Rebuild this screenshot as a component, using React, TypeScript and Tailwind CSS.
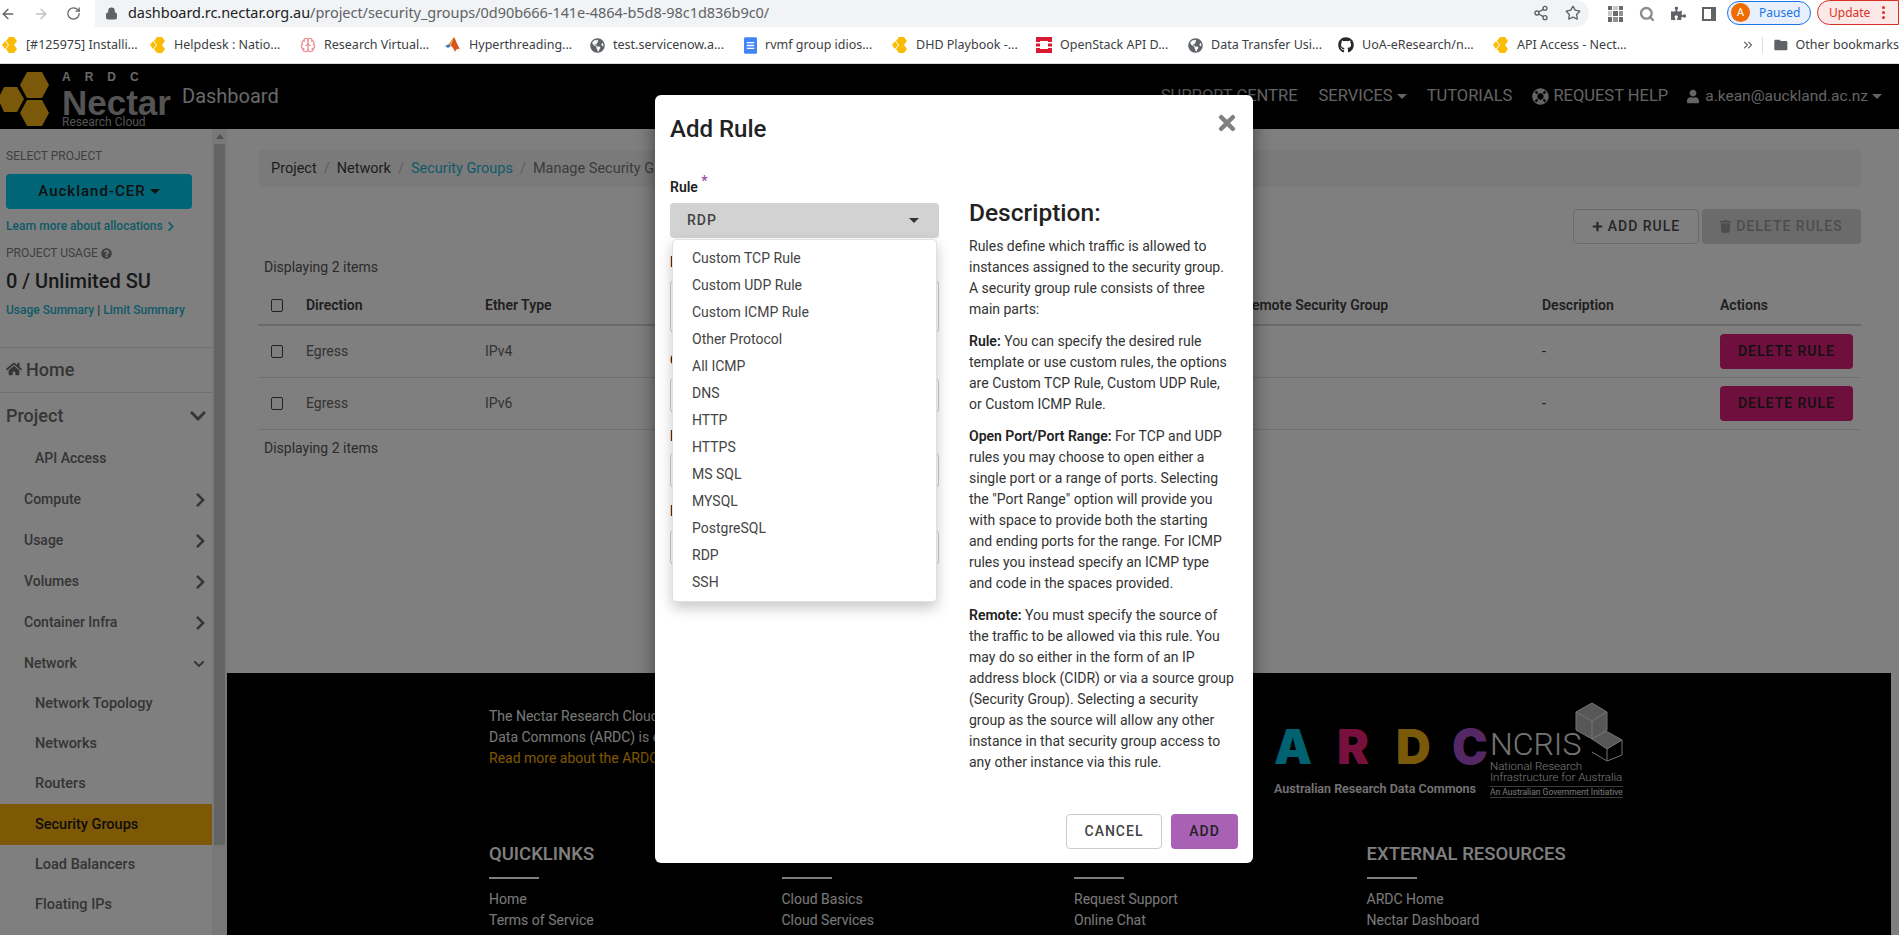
import { ArrowLeft, ArrowRight, RotateCw, Lock, Share2, Star, Search, ChevronsRight, Brain } from 'lucide-react';
import {
  FaChevronDown,
  FaChevronRight,
  FaGithub,
  FaGlobeAmericas,
  FaHome,
  FaLifeRing,
  FaPlus,
  FaPuzzlePiece,
  FaQuestionCircle,
  FaTimes,
  FaTrash,
  FaUser,
} from 'react-icons/fa';
import { MdFolder } from 'react-icons/md';

function HoneyIcon() {
  return (
    <svg viewBox="0 0 16 16" className="w-4 h-4 shrink-0">
      <path d="M7 0h5l3 4-3 4H7L4 4zM0 8l3-4 3 4-3 4zM7 8h5l3 4-3 4H7l-3-4z" fill="#fbbc04" />
    </svg>
  );
}

function MatlabIcon() {
  return (
    <svg viewBox="0 0 16 16" className="w-4 h-4 shrink-0">
      <path d="M0 9l4-2 2 2-3 2z" fill="#4a7ab5" />
      <path d="M4 7l5-7c2 3 3 8 6 12-3-1-4 1-5 3-1-3-3-6-6-8z" fill="#d9531e" />
      <path d="M9 0c-1 3-2 6-3 9l-2-2z" fill="#e8a33d" />
    </svg>
  );
}

function DocsIcon() {
  return (
    <svg viewBox="0 0 14 18" className="w-[13px] h-[17px] shrink-0">
      <rect width="14" height="18" rx="1.5" fill="#4285f4" />
      <path d="M3 6h8M3 9h8M3 12h8" stroke="#fff" strokeWidth="1.4" />
    </svg>
  );
}

function OpenStackIcon() {
  return (
    <svg viewBox="0 0 16 16" className="w-4 h-4 shrink-0">
      <path d="M0 0h16v5h-4V4H4v1H0zM0 11h4v1h8v-1h4v5H0zM0 6.500h4v3H0zM12 6.500h4v3h-4z" fill="#da1a32" />
    </svg>
  );
}

const bookmarks = [
  { w: 'w-[148px]', label: '[#125975] Installi...', icon: <HoneyIcon /> },
  { w: 'w-[150px]', label: 'Helpdesk : Natio...', icon: <HoneyIcon /> },
  { w: 'w-[145px]', label: 'Research Virtual...', icon: <Brain className="w-4 h-4 text-[#ec8f97]" /> },
  { w: 'w-[145px]', label: 'Hyperthreading...', icon: <MatlabIcon /> },
  { w: 'w-[154px]', label: 'test.servicenow.a...', icon: <FaGlobeAmericas className="w-[15px] h-[15px] text-[#5f6368]" /> },
  { w: 'w-[148px]', label: 'rvmf group idios...', icon: <DocsIcon /> },
  { w: 'w-[144px]', label: 'DHD Playbook -...', icon: <HoneyIcon /> },
  { w: 'w-[152px]', label: 'OpenStack API D...', icon: <OpenStackIcon /> },
  { w: 'w-[150px]', label: 'Data Transfer Usi...', icon: <FaGlobeAmericas className="w-[15px] h-[15px] text-[#5f6368]" /> },
  { w: 'w-[155px]', label: 'UoA-eResearch/n...', icon: <FaGithub className="w-4 h-4 text-[#24292e]" /> },
  { w: 'w-[200px]', label: 'API Access - Nect...', icon: <HoneyIcon /> },
];

function BrowserChrome() {
  return (
    <div className="h-16 bg-white border-b border-[#dadce0] font-['Noto_Sans',sans-serif]">
      <div className="h-[27px] flex items-center">
        <div className="w-[95px] flex items-center text-[#5f6368]">
          <ArrowLeft className="w-4 h-4 ml-0" />
          <ArrowRight className="w-4 h-4 ml-[17px] text-[#bdc1c6]" />
          <RotateCw className="w-[15px] h-[15px] ml-[17px]" />
        </div>
        <div className="w-[1494px] h-[27px] -mt-px bg-[#f1f3f4] rounded-r-[14px] flex items-center pl-[10px]">
          <Lock className="w-[13px] h-[13px] text-[#5f6368] fill-[#5f6368]" />
          <span className="ml-[10px] text-[14.500px] tracking-[-0.05px] text-[#5f6368] whitespace-nowrap">
            <span className="text-[#202124]">dashboard.rc.nectar.org.au</span>/project/security_groups/0d90b666-141e-4864-b5d8-98c1d836b9c0/
          </span>
          <Share2 className="w-4 h-4 ml-auto text-[#5f6368]" />
          <Star className="w-4 h-4 ml-4 mr-2 text-[#5f6368]" />
        </div>
        <div className="ml-[19px] h-4 w-[15px] grid grid-cols-3 gap-px opacity-80">
          <span className="bg-[#444]" /><span className="bg-[#bbb]" /><span className="bg-[#444]" />
          <span className="bg-[#bbb]" /><span className="bg-[#444]" /><span className="bg-[#777]" />
          <span className="bg-[#444]" /><span className="bg-[#777]" /><span className="bg-[#444]" />
        </div>
        <Search className="w-4 h-4 ml-[16px] text-[#8a8d91]" strokeWidth={3.500} />
        <FaPuzzlePiece className="w-[15px] h-[15px] ml-[16px] text-[#5f6368]" />
        <div className="w-[14px] h-[14px] ml-[16px] border-2 border-[#5f6368] border-r-[5px]" />
        <div className="ml-[11px] w-[84px] h-[24px] -mt-[2px] rounded-full border border-[#1a73e8] bg-[#e8f0fe] flex items-center pl-[3px]">
          <span className="w-[19px] h-[19px] rounded-full bg-[#ef6c00] text-white text-[11px] flex items-center justify-center">A</span>
          <span className="ml-[9px] text-[12px] text-[#1a73e8]">Paused</span>
        </div>
        <div className="ml-[6px] flex-1 h-[25px] -mt-[2px] rounded-l-full border border-[#d93025] bg-[#fce8e6] flex items-center pl-[11px] text-[12px] text-[#d93025]">
          Update
          <span className="ml-[12px] flex flex-col gap-[2px]">
            <span className="w-[3px] h-[3px] rounded-full bg-[#d93025]" />
            <span className="w-[3px] h-[3px] rounded-full bg-[#d93025]" />
            <span className="w-[3px] h-[3px] rounded-full bg-[#d93025]" />
          </span>
        </div>
      </div>
      <div className="h-[36px] flex items-center pl-[2px] text-[12.500px] text-[#3c4043]">
        {bookmarks.map(b => (
          <div key={b.label} className={`${b.w} shrink-0 flex items-center gap-2 whitespace-nowrap`}>
            {b.icon}
            <span>{b.label}</span>
          </div>
        ))}
        <ChevronsRight className="w-4 h-4 ml-[48px] text-[#5f6368]" />
        <div className="w-px h-4 bg-[#dadce0] ml-[7px]" />
        <MdFolder className="w-[18px] h-[18px] ml-[10px] text-[#5f6368]" />
        <span className="ml-[7px] whitespace-nowrap">Other bookmarks</span>
      </div>
    </div>
  );
}

function Caret() {
  return <span className="inline-block ml-1 align-middle border-x-[5px] border-x-transparent border-t-[5px] border-t-current" />;
}

function Header() {
  return (
    <div className="h-[65px] bg-black flex items-center">
      <svg viewBox="0 0 50 55" className="w-[50px] h-[55px] mt-[5px] shrink-0">
        <path d="M27 0h15l7 13-7 13H27l-7-13z M4 15h13l7 12-7 13H4l-6-13z M27 28h15l7 13-7 13H27l-7-13z" fill="#f5b414" />
      </svg>
      <div className="ml-[12px] w-[120px] self-start mt-[7px] font-['Liberation_Sans',sans-serif] text-[#a8a8a8]">
        <div className="text-[12px] leading-[12px] font-bold tracking-[14px] text-[#d0d0d0]">ARDC</div>
        <div className="text-[35px] leading-[26px] font-bold mt-[7px]">Nectar</div>
        <div className="text-[12px] leading-[12px] font-['Roboto',sans-serif]">Research Cloud</div>
      </div>
      <span className="text-[20px] text-[#d0d0d0] -mt-[1px]">Dashboard</span>
      <div className="ml-auto pr-[17px] flex items-center text-[16.500px] text-[#c8c8c8] whitespace-nowrap">
        <span>SUPPORT CENTRE</span>
        <span className="ml-[21px]">SERVICES<Caret /></span>
        <span className="ml-[20px]">TUTORIALS</span>
        <FaLifeRing className="ml-[20px] w-[17px] h-[17px]" />
        <span className="ml-[4px]">REQUEST HELP</span>
        <FaUser className="ml-[19px] w-[12px] h-[15px]" />
        <span className="ml-[6px] text-[15.500px]">a.kean@auckland.ac.nz<Caret /></span>
      </div>
    </div>
  );
}

const navItems = [
  { label: 'API Access', sub: true },
  { label: 'Compute', arrow: 'right' },
  { label: 'Usage', arrow: 'right' },
  { label: 'Volumes', arrow: 'right' },
  { label: 'Container Infra', arrow: 'right' },
  { label: 'Network', arrow: 'down' },
];

const networkItems = ['Network Topology', 'Networks', 'Routers', 'Security Groups', 'Load Balancers', 'Floating IPs'];

function Sidebar() {
  return (
    <div className="w-[227px] shrink-0 flex">
      <div className="w-[212px] bg-white text-[#6a6a6a]">
        <div className="px-[6px] pt-[19px] pb-[29px] border-b border-[#e0e0e0] h-[219px]">
          <div className="text-[12px] leading-4 text-[#808080]">SELECT PROJECT</div>
          <div className="mt-[10px] w-[186px] h-[35px] rounded bg-[#00caee] text-[#222] text-[15px] tracking-[1px] font-medium flex items-center justify-center">
            Auckland-CER<Caret />
          </div>
          <div className="mt-[9px] text-[12px] leading-4 font-medium text-[#1cb4d0] flex items-center whitespace-nowrap">
            Learn more about allocations <FaChevronRight className="w-[10px] h-[11px] ml-[3px]" />
          </div>
          <div className="mt-[11px] text-[12px] leading-4 text-[#808080] flex items-center">
            PROJECT USAGE <FaQuestionCircle className="w-[11px] h-[11px] ml-[3px]" />
          </div>
          <div className="mt-[6px] text-[20px] leading-7 text-[#333] font-medium">0 / Unlimited SU</div>
          <div className="mt-[7px] text-[12px] leading-4 font-medium text-[#1cb4d0]">
            Usage Summary <span className="text-[#555]">|</span> Limit Summary
          </div>
        </div>
        <div className="h-[45px] pb-[2px] border-b border-[#e0e0e0] flex items-center px-[6px] text-[18px] font-medium">
          <FaHome className="w-[16px] h-[16px] mr-[4px]" /> Home
        </div>
        <div className="h-[45px] flex items-center justify-between pl-[6px] pr-[5px] text-[18px] font-medium">
          Project <FaChevronDown className="w-[18px] h-[18px]" />
        </div>
        {navItems.map(item => (
          <div
            key={item.label}
            className={item.sub
              ? 'h-[41px] flex items-center pl-[35px] text-[14px] font-medium'
              : 'h-[41px] flex items-center justify-between pl-[24px] pr-[6px] text-[14px] font-medium'}
          >
            {item.label}
            {item.arrow === 'right' && <FaChevronRight className="w-[11px] h-[16px]" />}
            {item.arrow === 'down' && <FaChevronDown className="w-[14px] h-[12px]" />}
          </div>
        ))}
        <div>
          {networkItems.map(label => (
            <div
              key={label}
              className={label === 'Security Groups'
                ? 'h-[41px] flex items-center pl-[35px] text-[14.500px] font-medium bg-[#fab00a] text-[#1c1c1c]'
                : 'h-[40px] flex items-center pl-[35px] text-[14.500px] font-medium'}
            >
              {label}
            </div>
          ))}
        </div>
      </div>
      <div className="w-[15px] bg-[#f1f1f1] px-[2px]">
        <div className="h-[15px] flex items-center justify-center">
          <span className="border-x-[4px] border-x-transparent border-b-[5px] border-b-[#a3a3a3]" />
        </div>
        <div className="h-[701px] bg-[#c8c8c8]" />
      </div>
    </div>
  );
}

const gridCols = 'grid grid-cols-[48px_179px_195px_190px_180px_193px_299px_178px_141px]';

const rows = [
  { ether: 'IPv4', prefix: '0.0.0.0/0' },
  { ether: 'IPv6', prefix: '::/0' },
];

function Checkbox() {
  return <span className="block w-[12px] h-[13px] ml-[13px] border border-[#444] rounded-[2px]" />;
}

function MainContent() {
  return (
    <div className="flex-1 bg-white pl-[31px] pr-[30px] pt-[21px] h-[544px] font-['Roboto',sans-serif]">
      <div className="h-[37px] pt-px rounded bg-[#f5f5f5] flex items-center pl-[13px] text-[14.500px] text-[#3c3c3c] whitespace-nowrap">
        Project <span className="mx-[7px] text-[#bbb]">/</span> Network <span className="mx-[7px] text-[#bbb]">/</span>
        <span className="text-[#1cb4d0]">Security Groups</span> <span className="mx-[7px] text-[#bbb]">/</span>
        <span className="text-[#777]">Manage Security Group Rules</span>
      </div>
      <div className="mt-[22px] flex justify-end gap-[3px] text-[14px] tracking-[1px] font-medium">
        <div className="w-[126px] h-[35px] rounded border border-[#d4d4d4] text-[#4c4c4c] flex items-center justify-center gap-[5px]">
          <FaPlus className="w-[11px] h-[11px]" /> ADD RULE
        </div>
        <div className="w-[159px] h-[35px] rounded bg-[#d6d6d6] text-[#9a9a9a] flex items-center justify-center gap-[5px]">
          <FaTrash className="w-[11px] h-[13px]" /> DELETE RULES
        </div>
      </div>
      <div className="mt-[13px] h-[21px] pl-[6px] text-[14px] leading-[21px] text-[#555]">Displaying 2 items</div>
      <div className={`${gridCols} mt-[8px] h-[40px] items-center border-b-2 border-[#d4d4d4] text-[14px] font-semibold text-[#3e3e3e] whitespace-nowrap`}>
        <Checkbox />
        <span>Direction</span>
        <span>Ether Type</span>
        <span>IP Protocol</span>
        <span>Port Range</span>
        <span>Remote IP Prefix</span>
        <span>Remote Security Group</span>
        <span>Description</span>
        <span>Actions</span>
      </div>
      {rows.map(row => (
        <div key={row.ether} className={`${gridCols} h-[52px] items-center border-b border-[#e0e0e0] text-[14px] text-[#666]`}>
          <Checkbox />
          <span>Egress</span>
          <span>{row.ether}</span>
          <span>Any</span>
          <span>Any</span>
          <span>{row.prefix}</span>
          <span>-</span>
          <span className="text-[#333]">-</span>
          <span className="h-[35px] w-[133px] rounded bg-[#de1e7a] text-[#222] tracking-[1px] font-medium flex items-center justify-center">DELETE RULE</span>
        </div>
      ))}
      <div className="mt-[8px] pl-[6px] text-[14px] leading-[21px] text-[#555]">Displaying 2 items</div>
    </div>
  );
}

const footerCols = [
  { title: 'QUICKLINKS', links: ['Home', 'Terms of Service'] },
  { title: 'SUPPORT', links: ['Cloud Basics', 'Cloud Services'] },
  { title: 'CONTACT', links: ['Request Support', 'Online Chat'] },
  { title: 'EXTERNAL RESOURCES', links: ['ARDC Home', 'Nectar Dashboard'] },
];

function Footer() {
  return (
    <div className="h-[262px] bg-black text-[#f0f0f0] pl-[262px] pt-[33px] relative overflow-hidden font-['Roboto',sans-serif]">
      <div className="h-[137px] text-[14px] leading-[21px] whitespace-nowrap">
        <div>The Nectar Research Cloud is supported by the Australian Research</div>
        <div>Data Commons (ARDC) is enabled by NCRIS.</div>
        <div className="text-[#fab00a]">Read more about the ARDC</div>
      </div>
      <div className="flex">
        {footerCols.map(col => (
          <div key={col.title} className="w-[292.500px] shrink-0">
            <div className="text-[18.500px] leading-[22px] font-medium text-white whitespace-nowrap">{col.title}</div>
            <div className="mt-[12px] h-[2px] w-[50px] bg-white" />
            <div className="mt-[10px] text-[14px] leading-[21px]">
              {col.links.map(link => <div key={link}>{link}</div>)}
            </div>
          </div>
        ))}
      </div>

      {/* partner logos sit over the right of the intro row */}
      <div className="absolute left-[1047px] top-[54px] w-[210px]">
        <div className="h-[40px] relative text-[48px] leading-[40px] font-black font-['Inter',sans-serif]">
          <span className="absolute left-0 text-[#00c4e0]">A</span>
          <span className="absolute left-[63px] text-[#f0207c]">R</span>
          <span className="absolute left-[122px] text-[#f5b414]">D</span>
          <span className="absolute left-[178px] text-[#a850c8]">C</span>
        </div>
        <div className="mt-[14px] text-[12.500px] leading-4 font-semibold whitespace-nowrap text-[#e8e8e8]">Australian Research Data Commons</div>
      </div>
      <div className="absolute left-[1263px] top-[56px] w-[133px] text-[#e8e8e8]">
        <div className="text-[32px] leading-[30px] font-light">NCRIS</div>
        <div className="mt-[2px] text-[11.500px] leading-[11px] font-light whitespace-nowrap">National Research<br />Infrastructure for Australia</div>
        <div className="mt-[3px] border-y border-[#777] text-[8.500px] leading-[10px] whitespace-nowrap">An Australian Government Initiative</div>
      </div>
      <svg viewBox="0 0 48 60" className="absolute left-[1348px] top-[29px] w-[48px] h-[60px]" fill="none" stroke="#e8e8e8">
        <path d="M1 10L17 1l15 9v18L17 37 1 28z" fill="#e8e8e8" fillOpacity="0.75" />
        <path d="M1 10l16 9 15-9M17 19v18" />
        <path d="M17 37l14-8 16 9-15 9z" fill="#e8e8e8" fillOpacity="0.75" />
        <path d="M47 38v15l-15 6-15-9" />
        <path d="M32 47v12" />
      </svg>
    </div>
  );
}

const ruleOptions = [
  'Custom TCP Rule',
  'Custom UDP Rule',
  'Custom ICMP Rule',
  'Other Protocol',
  'All ICMP',
  'DNS',
  'HTTP',
  'HTTPS',
  'MS SQL',
  'MYSQL',
  'PostgreSQL',
  'RDP',
  'SSH',
];

function AddRuleModal() {
  return (
    <div className="absolute left-[655px] top-[31px] z-20 w-[598px] h-[768px] bg-white rounded-md shadow-[0_0_18px_rgba(0,0,0,0.5)] flex flex-col font-['Roboto',sans-serif] text-[#333]">
      <div className="relative px-[15px] pt-[19px]">
        <h2 className="text-[24px] leading-[30px] font-medium text-[#222]">Add Rule</h2>
        <FaTimes className="absolute right-[15px] top-[16px] w-[22px] h-[24px] text-[#808080]" />
      </div>
      <div className="flex-1 flex pl-[15px] mt-[33px]">
        <div className="w-[269px] text-[14px] font-semibold text-[#222]">
          <div className="leading-5">Rule <span className="relative -top-[6px] text-[#9c4fb0]">*</span></div>
          <div className="relative mt-[6px]">
            <div className="h-[35px] rounded bg-[#d2d2d2] flex items-center justify-between pl-[17px] pr-[20px] tracking-[1px] font-medium text-[#444]">
              RDP
              <span className="border-x-[5px] border-x-transparent border-t-[5px] border-t-[#333]" />
            </div>
            <div className="absolute z-10 left-[2px] right-[2px] top-full mt-px py-[5px] bg-white border border-[#e0e0e0] rounded shadow-[0_6px_14px_rgba(0,0,0,0.22)] font-normal text-[#444]">
              {ruleOptions.map(option => (
                <div key={option} className="h-[27px] pl-[19px] flex items-center">{option}</div>
              ))}
            </div>
          </div>
          <div className="mt-[14px] leading-5">Description</div>
          <div className="mt-[8px] h-[53px] rounded border border-[#ccc]" />
          <div className="mt-[17px] leading-5">Open Port</div>
          <div className="mt-[8px] h-[35px] rounded border border-[#ccc]" />
          <div className="mt-[13px] leading-5">Port</div>
          <div className="mt-[7px] h-[35px] rounded border border-[#ccc]" />
          <div className="mt-[13px] leading-5">Remote</div>
          <div className="mt-[9px] h-[35px] rounded border border-[#ccc]" />
        </div>
        <div className="ml-[30px] w-[270px] pt-[21px] text-[14px] leading-[21px] whitespace-nowrap">
          <h3 className="text-[24.500px] leading-[30px] font-medium text-[#222]">Description:</h3>
          <p className="mt-[8px]">
            Rules define which traffic is allowed to<br />
            instances assigned to the security group.<br />
            A security group rule consists of three<br />
            main parts:
          </p>
          <p className="mt-[11px]">
            <strong className="font-semibold text-[#222]">Rule:</strong> You can specify the desired rule<br />
            template or use custom rules, the options<br />
            are Custom TCP Rule, Custom UDP Rule,<br />
            or Custom ICMP Rule.
          </p>
          <p className="mt-[11px]">
            <strong className="font-semibold text-[#222]">Open Port/Port Range:</strong> For TCP and UDP<br />
            rules you may choose to open either a<br />
            single port or a range of ports. Selecting<br />
            the "Port Range" option will provide you<br />
            with space to provide both the starting<br />
            and ending ports for the range. For ICMP<br />
            rules you instead specify an ICMP type<br />
            and code in the spaces provided.
          </p>
          <p className="mt-[11px]">
            <strong className="font-semibold text-[#222]">Remote:</strong> You must specify the source of<br />
            the traffic to be allowed via this rule. You<br />
            may do so either in the form of an IP<br />
            address block (CIDR) or via a source group<br />
            (Security Group). Selecting a security<br />
            group as the source will allow any other<br />
            instance in that security group access to<br />
            any other instance via this rule.
          </p>
        </div>
      </div>
      <div className="flex justify-end gap-[9px] pr-[15px] pb-[14px] text-[14px] tracking-[1px] font-medium">
        <div className="w-[96px] h-[35px] rounded border border-[#ccc] flex items-center justify-center text-[#444]">CANCEL</div>
        <div className="w-[67px] h-[35px] rounded bg-[#a861b5] flex items-center justify-center text-[#222]">ADD</div>
      </div>
    </div>
  );
}

export default function App() {
  return (
    <div className="w-[1899px] h-[935px] overflow-hidden font-['Roboto',sans-serif]">
      <BrowserChrome />
      <div className="relative h-[871px] overflow-hidden">
        <Header />
        <div className="flex h-[806px]">
          <Sidebar />
          <div className="flex-1 min-w-0 flex flex-col">
            <MainContent />
            <Footer />
          </div>
          <div className="w-[8px] shrink-0 bg-white" />
        </div>
        {/* modal backdrop */}
        <div className="absolute inset-0 z-10 bg-black/50" />
        <AddRuleModal />
      </div>
    </div>
  );
}
